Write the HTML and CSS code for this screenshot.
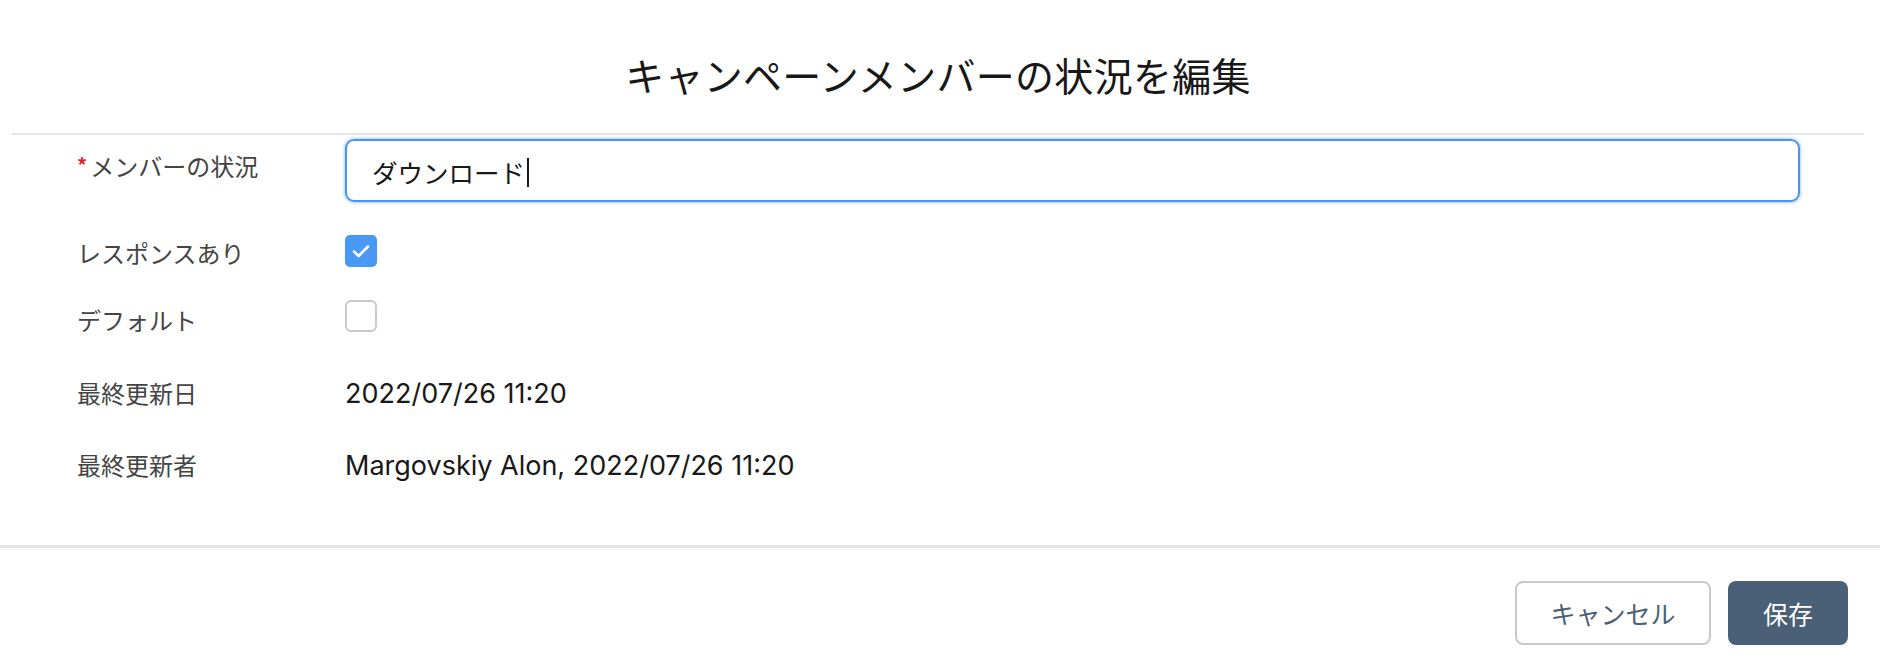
FILE: index.html
```html
<!DOCTYPE html>
<html lang="ja">
<head>
<meta charset="utf-8">
<title>キャンペーンメンバーの状況を編集</title>
<link rel="stylesheet" href="styles.css">
</head>
<body>
<div class="modal">
  <header class="modal-header">
    <h1 class="title">キャンペーンメンバーの状況を編集</h1>
  </header>
  <div class="modal-body">
    <div class="row row-input">
      <div class="label label-top"><abbr class="req">*</abbr>メンバーの状況</div>
      <div class="field">
        <div class="input"><span class="input-text">ダウンロード</span><span class="caret"></span></div>
      </div>
    </div>
    <div class="row row-cb1">
      <div class="label">レスポンスあり</div>
      <div class="field">
        <span class="checkbox checked">
          <svg viewBox="0 0 32 32" width="32" height="32"><path d="M9 16.5 L13.6 21 L23 11.5" fill="none" stroke="#fff" stroke-width="2.6" stroke-linecap="round" stroke-linejoin="round"/></svg>
        </span>
      </div>
    </div>
    <div class="row row-cb2">
      <div class="label">デフォルト</div>
      <div class="field">
        <span class="checkbox"></span>
      </div>
    </div>
    <div class="row row-text row-date">
      <div class="label">最終更新日</div>
      <div class="field value">2022/07/26 11:20</div>
    </div>
    <div class="row row-text row-by">
      <div class="label">最終更新者</div>
      <div class="field value">Margovskiy Alon, 2022/07/26 11:20</div>
    </div>
  </div>
  <footer class="modal-footer">
    <button class="btn btn-neutral">キャンセル</button>
    <button class="btn btn-brand">保存</button>
  </footer>
</div>
</body>
</html>
```
FILE: styles.css
```css
html, body {
  margin: 0;
  padding: 0;
  background: #ffffff;
}
body {
  font-family: "Inter", "Noto Sans CJK JP", sans-serif;
  color: #181818;
  width: 1880px;
  height: 668px;
  overflow: hidden;
}
.modal {
  display: flex;
  flex-direction: column;
}
.modal-header {
  height: 133px;
  margin: 0 16px 0 12px;
  border-bottom: 2px solid #e5e5e5;
  display: flex;
  align-items: center;
  justify-content: center;
  box-sizing: content-box;
}
.title {
  margin: 14px 0 0 0;
  font-family: "Noto Sans CJK JP", sans-serif;
  font-weight: 400;
  font-size: 39px;
  line-height: 48px;
  color: #181818;
  letter-spacing: 0.3px;
}
.modal-body {
  padding: 4px 0 0 77px;
  height: 410px;
  box-sizing: border-box;
}
.row {
  display: flex;
  align-items: center;
}
.label {
  width: 268px;
  flex: none;
  font-family: "Noto Sans CJK JP", sans-serif;
  font-size: 24px;
  line-height: 36px;
  color: #444444;
}
.label-top {
  align-self: flex-start;
  margin-top: 9px;
}
.req {
  color: #d8232a;
  text-decoration: none;
  font-size: 20px;
  font-weight: 700;
  margin-right: 3px;
  position: relative;
  top: -3px;
}
.field {
  flex: 1;
}
.row-input {
  height: 63px;
  align-items: flex-start;
}
.input {
  height: 63px;
  margin-right: 80px;
  box-sizing: border-box;
  border: 2px solid #4a94f0;
  border-radius: 9px;
  box-shadow: 0 0 3px 1px rgba(74, 148, 240, 0.45);
  display: flex;
  align-items: center;
  padding-left: 25px;
}
.input-text {
  font-family: "Noto Sans CJK JP", sans-serif;
  font-size: 25.5px;
  color: #181818;
  line-height: 30px;
  margin-top: 2px;
}
.caret {
  display: inline-block;
  width: 2px;
  height: 29px;
  background: #181818;
  margin-left: 2px;
  margin-top: 4px;
}
.row-cb1 {
  margin-top: 33px;
  height: 32px;
}
.row-cb1 .label {
  margin-top: 3px;
}
.row-cb2 {
  margin-top: 32px;
  height: 33px;
}
.row-cb2 .label {
  margin-top: 8px;
}
.checkbox {
  display: block;
  width: 32px;
  height: 32px;
  box-sizing: border-box;
  border: 2px solid #c9c9c9;
  border-radius: 6px;
  background: #ffffff;
}
.checkbox.checked {
  border: none;
  background: #4a98f5;
  border-radius: 5px;
}
.checkbox svg {
  display: block;
}
.row-text {
  height: 36px;
}
.row-date {
  margin-top: 43px;
}
.row-by {
  margin-top: 36px;
}
.value {
  font-family: "Inter", "Noto Sans CJK JP", sans-serif;
  font-size: 27px;
  line-height: 36px;
  color: #181818;
  padding-top: 2px;
}
.modal-footer {
  border-top: 3px solid #e5e5e5;
  height: 123px;
  box-sizing: border-box;
  display: flex;
  justify-content: flex-end;
  align-items: flex-start;
  padding: 33px 32px 0 0;
  gap: 17px;
}
.btn {
  height: 64px;
  font-family: "Noto Sans CJK JP", sans-serif;
  font-size: 25px;
  border-radius: 8px;
  cursor: pointer;
  box-sizing: border-box;
}
.btn-neutral {
  width: 196px;
  background: #ffffff;
  color: #4a6076;
  border: 2px solid #c9c9c9;
}
.btn-brand {
  width: 120px;
  background: #4a6076;
  color: #ffffff;
  border: none;
}
```
